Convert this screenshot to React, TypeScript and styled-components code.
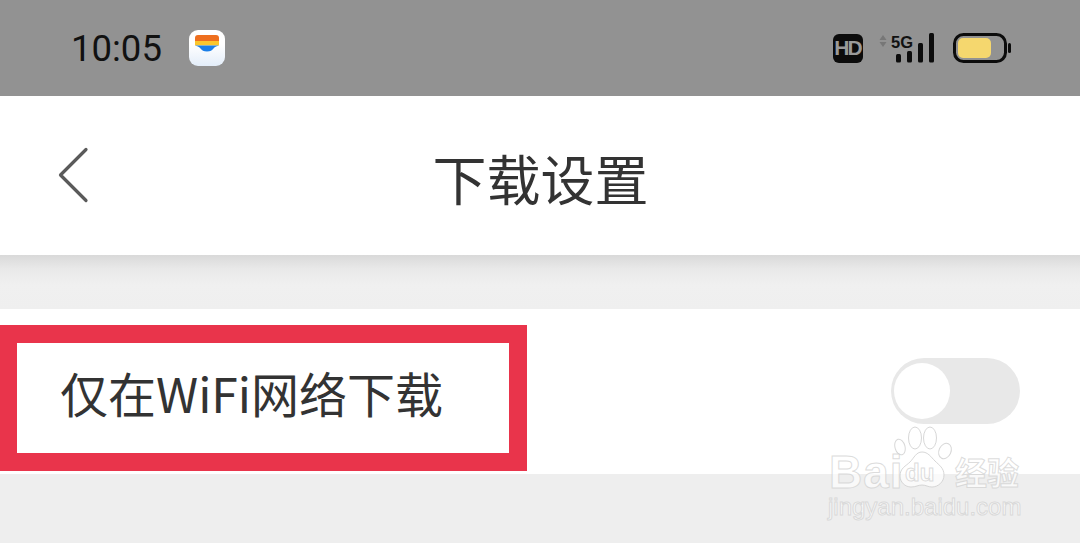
import React from "react";
import styled, { createGlobalStyle } from "styled-components";

const GlobalStyle = createGlobalStyle`
  html, body {
    margin: 0;
    padding: 0;
    background: #eeeeee;
  }
  * {
    box-sizing: border-box;
  }
`;

const cjk = `"Noto Sans CJK SC", "Noto Sans", sans-serif`;

const Page = styled.div`
  position: relative;
  width: 1080px;
  height: 543px;
  overflow: hidden;
  background: #eeeeee;
`;

export default function App() {
  return (
    <Page>
      <GlobalStyle />
      <StatusBar />
      <NavBar />
      <ShadowGap />
      <SettingRow />
      <Watermark />
    </Page>
  );
}

const StatusBox = styled.div`
  height: 96px;
  background: #929292;
  display: flex;
  align-items: center;
  padding: 0 69px 0 71px;

  .time {
    font-family: Roboto, "Liberation Sans", sans-serif;
    font-size: 36.5px;
    font-weight: 400;
    color: #111;
    width: 118px;
  }

  .right {
    margin-left: auto;
    display: flex;
    align-items: center;
  }
`;

const Hd = styled.div`
  width: 30px;
  height: 29px;
  border-radius: 6px;
  background: #0c0c0c;
  color: #9a9a9a;
  font-family: "Liberation Sans", sans-serif;
  font-weight: 700;
  font-size: 21px;
  letter-spacing: -2px;
  display: flex;
  align-items: center;
  justify-content: center;
  padding-right: 1px;
  margin-right: 16px;
`;

function StatusBar() {
  return (
    <StatusBox>
      <span className="time">10:05</span>
      <svg width="36" height="36" viewBox="0 0 36 36">
        <defs>
          <linearGradient id="appbg" x1="0" y1="0" x2="0" y2="1">
            <stop offset="0.4" stopColor="#ffffff" />
            <stop offset="1" stopColor="#e3edf9" />
          </linearGradient>
        </defs>
        <rect width="36" height="36" rx="9" fill="url(#appbg)" />
        <path d="M6 8a3 3 0 0 1 3-3h18a3 3 0 0 1 3 3v3H6z" fill="#ee6f1f" />
        <rect x="6" y="11" width="24" height="4.500" fill="#fbc62d" />
        <path d="M6 15.500h24c-2 .5-4 1-5.500 3-1.500 2-3 3-6.500 3s-5-1-6.500-3c-1.500-2-3.500-2.500-5.500-3z" fill="#1a7ee8" />
      </svg>
      <div className="right">
        <Hd>HD</Hd>
        <SignalIcon />
        <BatteryIcon />
      </div>
    </StatusBox>
  );
}

const SignalSvg = styled.svg`
  display: block;
  margin-right: 18px;

  text {
    font-family: "Liberation Sans", sans-serif;
    font-weight: 700;
    font-size: 17px;
  }
`;

function SignalIcon() {
  return (
    <SignalSvg width="56" height="30" viewBox="0 0 56 30">
      <path d="M4 2L7.500 7H0.500zM4 14L0.500 9H7.500z" fill="#777" />
      <text x="12" y="14.500" fill="#111" textLength="22" lengthAdjust="spacingAndGlyphs">5G</text>
      <rect x="17" y="21" width="5" height="8.500" rx="1.500" fill="#0c0c0c" />
      <rect x="28" y="18" width="5" height="11.500" rx="1.500" fill="#0c0c0c" />
      <rect x="39" y="10" width="5" height="19.500" rx="1.500" fill="#0c0c0c" />
      <rect x="50" y="0" width="5" height="29.500" rx="1.500" fill="#0c0c0c" />
    </SignalSvg>
  );
}

function BatteryIcon() {
  return (
    <svg width="58" height="30" viewBox="0 0 58 30" style={{ display: "block" }}>
      <rect x="1.500" y="1.500" width="51" height="27" rx="9" fill="none" stroke="#0c0c0c" strokeWidth="3" />
      <rect x="5" y="5" width="33" height="20" rx="5" fill="#f5d76e" />
      <rect x="55" y="10" width="3" height="10" rx="1.500" fill="#0c0c0c" />
    </svg>
  );
}

const NavBox = styled.div`
  height: 159px;
  background: #fff;
  display: grid;
  grid-template-columns: 1fr auto 1fr;
  align-items: center;
  padding-left: 57px;

  svg {
    display: block;
    margin-top: -2px;
  }

  h1 {
    margin: 0 0 -4px;
    font-family: ${cjk};
    font-size: 54px;
    line-height: 1;
    font-weight: 400;
    color: #333;
    transform: translateX(-28px);
  }
`;

function NavBar() {
  return (
    <NavBox>
      <svg width="32" height="56" viewBox="0 0 32 56">
        <path d="M29 2.500L3.500 28 29 53.500" fill="none" stroke="#5a5a5a" strokeWidth="3.200" strokeLinecap="round" strokeLinejoin="round" />
      </svg>
      <h1>下载设置</h1>
      <span />
    </NavBox>
  );
}

const ShadowGap = styled.div`
  height: 54px;
  background: linear-gradient(to bottom, #d9d9d9 0, #e9e9e9 14px, #f0f0f0 30px, #efefef 100%);
`;

const RowBox = styled.div`
  position: relative;
  height: 165px;
  background: #fff;
  display: flex;
  align-items: center;
  justify-content: space-between;
  padding: 0 60px;

  .label {
    font-family: ${cjk};
    font-size: 48px;
    font-weight: 400;
    line-height: 1;
    color: #333;
    margin-top: 1px;
  }
`;

const Toggle = styled.div`
  width: 129px;
  height: 66px;
  border-radius: 33px;
  background: #e8e8e8;
  display: flex;
  align-items: center;
  padding-left: 3px;
  margin-top: -1px;

  &::before {
    content: "";
    width: 56px;
    height: 56px;
    border-radius: 50%;
    background: #fff;
  }
`;

const Highlight = styled.div`
  position: absolute;
  left: 0;
  top: 16px;
  width: 527px;
  height: 146px;
  border: 18px solid #e9344b;
  border-left-width: 17px;
`;

function SettingRow() {
  return (
    <RowBox>
      <span className="label">仅在WiFi网络下载</span>
      <Toggle />
      <Highlight />
    </RowBox>
  );
}

const MarkBox = styled.div`
  position: absolute;
  left: 828px;
  top: 426px;
  width: 194px;
  height: 98px;
  font-family: "Liberation Sans", sans-serif;
  color: rgba(255, 255, 255, 0.7);
  -webkit-text-stroke: 1px rgba(205, 205, 205, 0.7);

  span {
    position: absolute;
    line-height: 1;
  }

  .bai {
    left: 1px;
    top: 23px;
    font-size: 46px;
    font-weight: 700;
    letter-spacing: 1px;
  }

  .du {
    left: 77px;
    top: 35px;
    font-size: 24px;
    font-weight: 700;
  }

  .jy {
    left: 127px;
    top: 29px;
    font-family: ${cjk};
    font-size: 32px;
    font-weight: 700;
  }

  .url {
    left: 0;
    top: 69px;
    font-size: 24px;
    white-space: nowrap;
  }

  svg {
    position: absolute;
    left: 66px;
    top: 0;
  }
`;

function Watermark() {
  return (
    <MarkBox>
      <svg width="60" height="64" viewBox="0 0 60 64" fill="rgba(255,255,255,0.7)" stroke="rgba(205,205,205,0.8)" strokeWidth="1">
        <ellipse cx="6" cy="21" rx="5" ry="8" transform="rotate(-15 6 21)" />
        <ellipse cx="21" cy="12" rx="6.500" ry="11" />
        <ellipse cx="36" cy="12" rx="6.500" ry="11" />
        <ellipse cx="51" cy="25" rx="6" ry="8" transform="rotate(25 51 25)" />
        <path d="M28 26c6 0 9 5 13 9s9 7 9 14-6 12-12 12c-4 0-6-2-10-2s-6 2-11 2c-6 0-11-5-11-11 0-8 6-10 10-14s6-10 12-10z" />
      </svg>
      <span className="bai">Bai</span>
      <span className="du">du</span>
      <span className="jy">经验</span>
      <span className="url">jingyan.baidu.com</span>
    </MarkBox>
  );
}
